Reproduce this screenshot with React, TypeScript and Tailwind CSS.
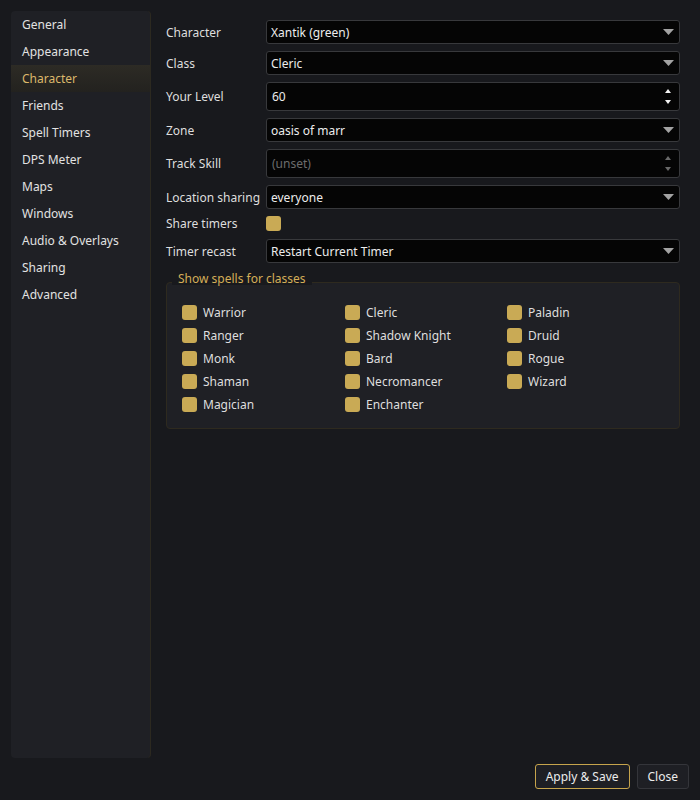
import React from 'react';

const navItems = [
  'General',
  'Appearance',
  'Character',
  'Friends',
  'Spell Timers',
  'DPS Meter',
  'Maps',
  'Windows',
  'Audio & Overlays',
  'Sharing',
  'Advanced',
];

const classCols = [
  ['Warrior', 'Ranger', 'Monk', 'Shaman', 'Magician'],
  ['Cleric', 'Shadow Knight', 'Bard', 'Necromancer', 'Enchanter'],
  ['Paladin', 'Druid', 'Rogue', 'Wizard'],
];

function Check() {
  return <span className="block w-[15px] h-[15px] rounded-[3px] bg-[#c9aa55] shrink-0" />;
}

function Select({ value }: { value: string }) {
  return (
    <div className="flex-1 h-[24px] flex items-center justify-between bg-[#050505] border border-[#38393c] rounded-[3px] pl-[4px] pr-[5px] text-[#ececec]">
      <span className="pt-[1px]">{value}</span>
      <svg width="11" height="6" viewBox="0 0 11 6">
        <path d="M0 0 H11 L5.5 6 Z" fill="#a3a3a3" />
      </svg>
    </div>
  );
}

function NumberInput({ value, placeholder }: { value?: string; placeholder?: string }) {
  const color = value ? '#f2f2f2' : '#6a6a6a';
  return (
    <div className="flex-1 h-[29px] flex items-center justify-between bg-[#050505] border border-[#38393c] rounded-[3px] pl-[5px] pr-[8px]">
      {value ? (
        <span className="text-[#ececec] pt-[1px]">{value}</span>
      ) : (
        <span className="text-[#6c6c6c] pt-[1px]">{placeholder}</span>
      )}
      <div className="flex flex-col gap-[7px]">
        <svg width="6" height="4" viewBox="0 0 6 4">
          <path d="M0 4 H6 L3 0 Z" fill={color} />
        </svg>
        <svg width="6" height="4" viewBox="0 0 6 4">
          <path d="M0 0 H6 L3 4 Z" fill={color} />
        </svg>
      </div>
    </div>
  );
}

function Row({ label, children }: { label: string; children: React.ReactNode }) {
  return (
    <div className="flex items-center">
      <span className="w-[100px] shrink-0 text-[#dedede] pt-[1px]">{label}</span>
      {children}
    </div>
  );
}

export default function App() {
  return (
    <div
      className="w-[700px] h-[800px] bg-[#18191d] flex flex-col p-[11px] text-[12px] leading-[16px]"
      style={{ fontFamily: '"Noto Sans", "Open Sans", sans-serif' }}
    >
      <div className="flex flex-1 min-h-0">
        {/* sidebar */}
        <div className="w-[140px] h-[747px] bg-[#1f2025] rounded-[4px] border-r border-[#2c2920] flex flex-col overflow-hidden">
          {navItems.map((item) => (
            <div
              key={item}
              className={
                item === 'Character'
                  ? 'h-[27px] flex items-center pl-[11px] pt-[1px] bg-gradient-to-b from-[#2d2b25] to-[#23221f] text-[#dcb86b]'
                  : 'h-[27px] flex items-center pl-[11px] pt-[1px] text-[#e2e2e2]'
              }
            >
              {item}
            </div>
          ))}
        </div>

        {/* settings */}
        <div className="flex-1 pl-[15px] pr-[9px] pt-[9px] flex flex-col gap-[7px]">
          <Row label="Character">
            <Select value="Xantik (green)" />
          </Row>
          <Row label="Class">
            <Select value="Cleric" />
          </Row>
          <Row label="Your Level">
            <NumberInput value="60" />
          </Row>
          <Row label="Zone">
            <Select value="oasis of marr" />
          </Row>
          <Row label="Track Skill">
            <NumberInput placeholder="(unset)" />
          </Row>
          <Row label="Location sharing">
            <Select value="everyone" />
          </Row>
          <div className="flex items-center h-[15px]">
            <span className="w-[100px] shrink-0 text-[#dedede] pt-[1px]">Share timers</span>
            <Check />
          </div>
          <div className="mt-[1px]">
            <Row label="Timer recast">
              <Select value="Restart Current Timer" />
            </Row>
          </div>

          {/* class filter group */}
          <div className="relative mt-[12px] border border-[#2e2a1f] rounded-[4px] bg-[#1f2025] pl-[15px] pt-[22px] pb-[16px]">
            <span className="absolute left-[5px] -top-[10px] h-[12px] px-[6px] leading-[12px] bg-[#18191d] text-[#d4ae58]">
              Show spells for classes
            </span>
            <div className="grid grid-cols-[163px_162px_1fr]">
              {classCols.map((col, i) => (
                <div key={i} className="flex flex-col gap-[8px]">
                  {col.map((name) => (
                    <div key={name} className="flex items-center gap-[6px] h-[15px]">
                      <Check />
                      <span className="text-[#dedede] pt-[1px]">{name}</span>
                    </div>
                  ))}
                </div>
              ))}
            </div>
          </div>
        </div>
      </div>

      {/* footer */}
      <div className="flex justify-end gap-[7px] pt-[6px]">
        <button className="h-[25px] px-[10px] bg-[#1e1f24] border border-[#c6a44c] rounded-[3px] text-[#ececec]">
          Apply &amp; Save
        </button>
        <button className="h-[25px] px-[10px] bg-[#1e1f24] border border-[#34353a] rounded-[3px] text-[#ececec]">
          Close
        </button>
      </div>
    </div>
  );
}
